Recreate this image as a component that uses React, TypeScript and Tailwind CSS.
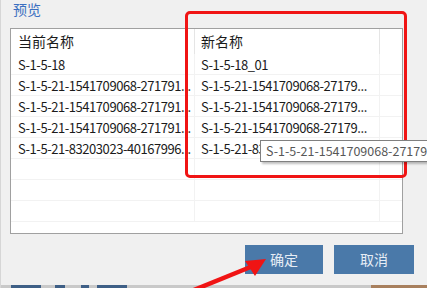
const rows: [string, string][] = [
  ["S-1-5-18", "S-1-5-18_01"],
  ["S-1-5-21-1541709068-271791...", "S-1-5-21-1541709068-27179..."],
  ["S-1-5-21-1541709068-271791...", "S-1-5-21-1541709068-27179..."],
  ["S-1-5-21-1541709068-271791...", "S-1-5-21-1541709068-27179..."],
  ["S-1-5-21-83203023-40167996...", "S-1-5-21-83203023-40167..."],
  ["", ""],
  ["", ""],
  ["", ""],
];

const font = { fontFamily: '"Noto Sans CJK SC", "Noto Sans", sans-serif' };

export default function App() {
  return (
    <div
      className="relative w-[427px] h-[288px] overflow-hidden bg-[#f0f0f0] border-l border-[#d6d6d6] flex flex-col text-[#1b1b1b]"
      style={font}
    >
      {/* title */}
      <div className="h-[28px] pl-[12px] text-[14px] leading-[18px] text-[#3b6fc0]">
        预览
      </div>

      {/* list */}
      <div className="ml-[9px] w-[393px] h-[206px] border border-[#a0a0a0] bg-white overflow-hidden">
        <div className="grid grid-cols-[184px_185px_22px] h-[25px] text-[14px]">
          <div className="pl-[7px] flex items-center border-r border-[#e5e5e5]">当前名称</div>
          <div className="pl-[6px] flex items-center border-r border-[#e5e5e5]">新名称</div>
          <div />
        </div>
        {rows.map(([a, b], i) => (
          <div
            key={i}
            className="grid grid-cols-[184px_185px_22px] h-[21px] text-[13px] tracking-[-0.45px] leading-[21px] border-b border-[#f2f2f2]"
          >
            <div className="pl-[7px] whitespace-nowrap overflow-hidden border-r border-[#f2f2f2]">{a}</div>
            <div className="pl-[6px] whitespace-nowrap overflow-hidden border-r border-[#f2f2f2]">{b}</div>
            <div />
          </div>
        ))}
      </div>

      {/* buttons */}
      <div className="flex justify-end gap-[11px] pr-[13px] mt-[11px]">
        <button className="w-[78px] h-[29px] bg-[#4a79a9] text-[#e6edf5] text-[14px]">确定</button>
        <button className="w-[80px] h-[29px] bg-[#4a79a9] text-[#e6edf5] text-[14px]">取消</button>
      </div>

      {/* strip of the window below */}
      <div className="mt-auto h-[3px] bg-[#c9c9c9] flex">
        <div className="ml-[10px] w-[30px] bg-[#3e5f86]" />
        <div className="ml-[14px] w-[10px] bg-[#3e5f86]" />
        <div className="ml-[16px] w-[8px] bg-[#3e5f86]" />
        <div className="ml-[8px] w-[30px] bg-[#3e5f86]" />
        <div className="ml-auto w-[56px] bg-[#a8805e]" />
      </div>

      {/* red highlight box */}
      <div className="absolute left-[184px] top-[11px] w-[222px] h-[167px] border-[3px] border-[#f01414] rounded-[5px]" />

      {/* tooltip */}
      <div className="absolute left-[259px] top-[140px] h-[22px] pl-[5px] pr-[8px] bg-white border border-[#808080] shadow-[2px_2px_2px_rgba(0,0,0,0.25)] text-[12.5px] leading-[20px] text-[#575757] whitespace-nowrap">
        S-1-5-21-1541709068-27179...
      </div>

      {/* arrow */}
      <svg className="absolute left-0 top-0" width="427" height="288" viewBox="0 0 427 288">
        <line x1="188" y1="292" x2="252" y2="266" stroke="#f01414" strokeWidth="4.5" />
        <polygon points="265,259 244,261 254,276" fill="#f01414" />
      </svg>
    </div>
  );
}
